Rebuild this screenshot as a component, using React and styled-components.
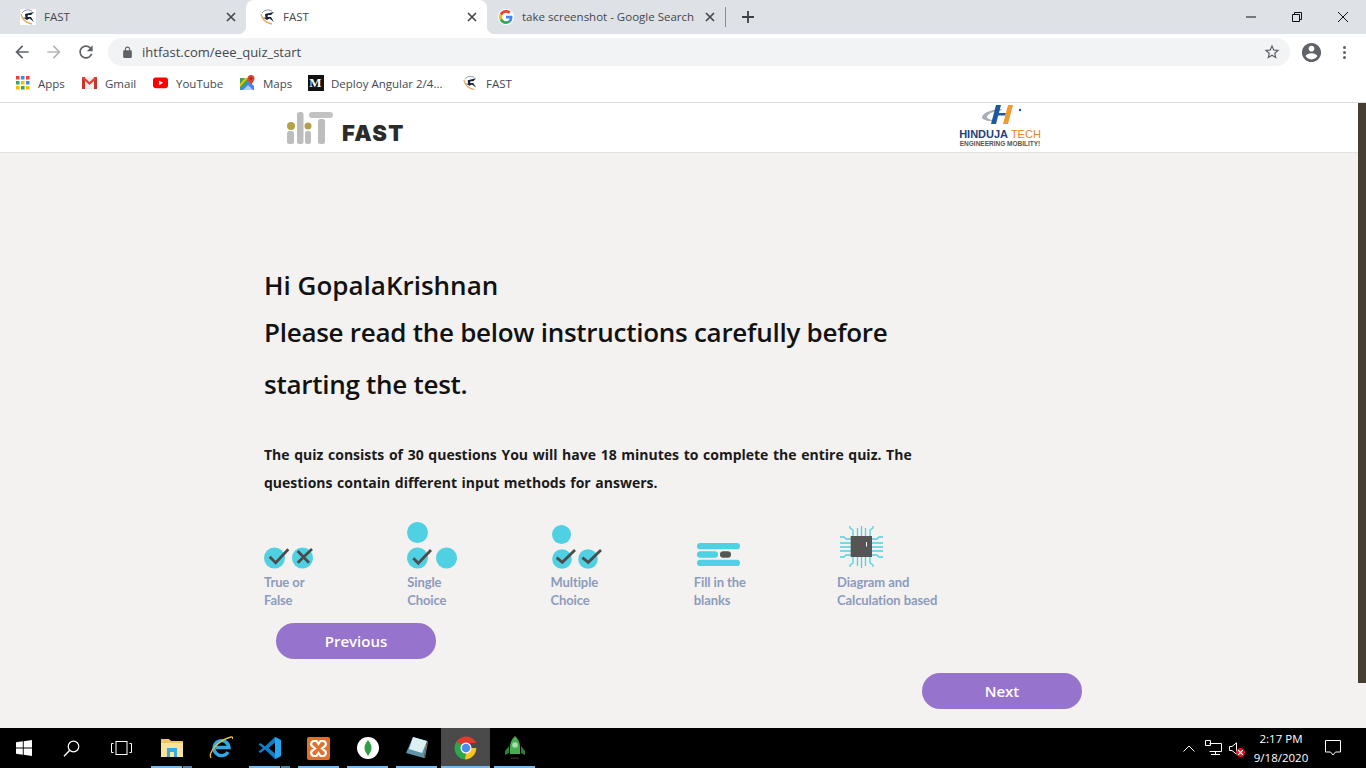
import React from "react";
import styled, { createGlobalStyle } from "styled-components";

const GlobalStyle = createGlobalStyle`
    html, body {
        margin: 0;
        padding: 0;
        overflow: hidden;
        background: #f3f2f1;
    }
    * {
        box-sizing: border-box;
    }
`;

const Favicon = ({ size = 16 }) => (
    <svg width={size} height={size} viewBox="0 0 16 16">
        <rect width="16" height="16" fill="#fff" />
        <path d="M1 5c1 5 5 9 11 10" fill="none" stroke="#eaa75c" strokeWidth="1.300" />
        <path d="M2 4C4 1 8 0 12 2" fill="none" stroke="#7d8594" strokeWidth="0.900" />
        <path d="M5 5l9-2-3 3h-3l-.5 2H11l3 5-4.500-3.500L7 11 3 8.500l2.500.2z" fill="#17233f" />
    </svg>
);

const GoogleIcon = () => (
    <svg width="14" height="14" viewBox="0 0 48 48">
        <path fill="#EA4335" d="M24 9.5c3.5 0 6.700 1.200 9.200 3.600l6.900-6.900C35.900 2.400 30.500 0 24 0 14.600 0 6.500 5.400 2.600 13.200l8 6.200C12.500 13.700 17.800 9.500 24 9.500z" />
        <path fill="#4285F4" d="M46.100 24.500c0-1.600-.1-3.100-.4-4.500H24v9h12.400c-.5 2.900-2.200 5.300-4.600 7l7.700 6c4.400-4.100 6.600-10.200 6.600-17.500z" />
        <path fill="#FBBC05" d="M10.500 28.600c-.5-1.400-.8-3-.8-4.600s.3-3.200.8-4.600l-8-6.200C.9 16.500 0 20.100 0 24s.9 7.500 2.600 10.800l7.900-6.200z" />
        <path fill="#34A853" d="M24 48c6.500 0 11.900-2.100 15.900-5.800l-7.700-6c-2.200 1.500-4.900 2.300-8.200 2.300-6.200 0-11.500-4.200-13.400-9.900l-8 6.200C6.500 42.600 14.600 48 24 48z" />
    </svg>
);

const CloseIcon = () => (
    <svg width="10" height="10" viewBox="0 0 10 10">
        <path d="M1 1l8 8M9 1l-8 8" stroke="#45484d" strokeWidth="1.7" />
    </svg>
);

const Material = ({ d, size = 20, color = "#5f6368" }) => (
    <svg width={size} height={size} viewBox="0 0 24 24">
        <path d={d} fill={color} />
    </svg>
);

const BACK = "M20 11H7.830l5.590-5.590L12 4l-8 8 8 8 1.410-1.410L7.830 13H20v-2z";
const FORWARD = "M12 4l-1.410 1.410L16.170 11H4v2h12.170l-5.580 5.590L12 20l8-8z";
const RELOAD = "M17.650 6.350C16.200 4.900 14.210 4 12 4c-4.420 0-7.990 3.580-7.990 8s3.570 8 7.990 8c3.730 0 6.840-2.550 7.730-6h-2.080c-.82 2.330-3.040 4-5.650 4-3.310 0-6-2.690-6-6s2.690-6 6-6c1.660 0 3.140.69 4.220 1.780L13 11h7V4l-2.350 2.350z";
const LOCK = "M18 8h-1V6c0-2.760-2.240-5-5-5S7 3.240 7 6v2H6c-1.100 0-2 .9-2 2v10c0 1.100.9 2 2 2h12c1.100 0 2-.9 2-2V10c0-1.100-.9-2-2-2zM9 6c0-1.660 1.340-3 3-3s3 1.340 3 3v2H9V6z";
const STAR = "M22 9.240l-7.190-.62L12 2 9.190 8.630 2 9.240l5.460 4.730L5.820 21 12 17.270 18.180 21l-1.630-7.030L22 9.240zM12 15.400l-3.760 2.270 1-4.280-3.320-2.880 4.380-.38L12 6.100l1.710 4.040 4.380.38-3.320 2.880 1 4.280L12 15.400z";
const ACCOUNT = "M12 2C6.480 2 2 6.480 2 12s4.480 10 10 10 10-4.480 10-10S17.520 2 12 2zm0 3c1.660 0 3 1.340 3 3s-1.340 3-3 3-3-1.340-3-3 1.340-3 3-3zm0 14.200c-2.500 0-4.710-1.280-6-3.220.03-1.990 4-3.080 6-3.080 1.990 0 5.970 1.090 6 3.080-1.290 1.940-3.500 3.220-6 3.220z";

const AppsIcon = () => {
    const colors = ["#ea4335", "#4285f4", "#ea4335", "#34a853", "#fbbc05", "#4285f4", "#fbbc05", "#34a853", "#fbbc05"];
    return (
        <svg width="14" height="14" viewBox="0 0 14 14">
            {colors.map((c, i) => (
                <rect key={i} x={(i % 3) * 5} y={Math.floor(i / 3) * 5} width="3.500" height="3.500" fill={c} />
            ))}
        </svg>
    );
};

const GmailIcon = () => (
    <svg width="15" height="12" viewBox="0 0 15 12">
        <rect x="0" y="0" width="15" height="12" fill="#eee" />
        <path d="M0 0h3v12H0zM12 0h3v12h-3z" fill="#c5372c" />
        <path d="M0 0h2l5.500 5L13 0h2v1.500L7.500 8 0 1.500z" fill="#d9443a" />
    </svg>
);

const YouTubeIcon = () => (
    <svg width="16" height="12" viewBox="0 0 16 12">
        <rect width="16" height="11.500" rx="3" fill="#f00" />
        <path d="M6.300 3.200v5.200L10.700 5.800z" fill="#fff" />
    </svg>
);

const MapsIcon = () => (
    <svg width="15" height="16" viewBox="0 0 15 16">
        <path d="M0 3h9v12H0z" fill="#34a853" />
        <path d="M0 15L9 6l5 5v4z" fill="#4285f4" />
        <path d="M0 9l5-6h3L0 12z" fill="#fbbc05" />
        <path d="M3 15l5-5 5 5z" fill="#fff" opacity="0.6" />
        <path d="M11 0a3.500 3.500 0 0 1 3.500 3.500C14.500 6 11 9.500 11 9.500S7.500 6 7.500 3.500A3.500 3.500 0 0 1 11 0z" fill="#db4437" />
        <circle cx="11" cy="3.500" r="1.200" fill="#8e2a20" />
    </svg>
);

const IhtLogo = () => (
    <svg width="46" height="32" viewBox="0 0 46 32">
        <circle cx="4" cy="14" r="4" fill="#b5a04a" />
        <rect x="0" y="19" width="7" height="13" rx="2.500" fill="#bdbdbd" />
        <rect x="10" y="0" width="6.500" height="32" rx="2.500" fill="#bdbdbd" />
        <circle cx="21" cy="14" r="3.500" fill="#b5a04a" />
        <rect x="18" y="19" width="6" height="13" rx="2.500" fill="#bdbdbd" />
        <rect x="22" y="0" width="24" height="6" rx="3" fill="#c2c2c2" />
        <rect x="31" y="7" width="7" height="25" rx="2.500" fill="#bdbdbd" />
    </svg>
);

const HindujaMark = () => (
    <svg width="46" height="21" viewBox="0 0 46 21">
        <path d="M2 13C3 8 14 5 22 5l-1 1.500C14 7 7 10 7 13c0 2 4 3 9 3.500l-1 1C8 17 1.500 16 2 13z" fill="#a9adb5" />
        <path d="M16 1h5l-5 19h-5z" fill="#1c5aa0" />
        <path d="M18 9h8l-.6 2.500h-8z" fill="#1c5aa0" />
        <path d="M28 1h5l-5 19h-5z" fill="#ee9b2f" />
        <circle cx="40" cy="6" r="1.200" fill="#1c5aa0" />
    </svg>
);

const Check = ({ points }) => (
    <polyline points={points} fill="none" stroke="#4c4c4c" strokeWidth="2.800" />
);

const TrueFalseIcon = () => (
    <svg width="50" height="48" viewBox="0 0 50 48">
        <circle cx="10.500" cy="36" r="10.500" fill="#4fd0e3" />
        <circle cx="38.500" cy="36" r="10.500" fill="#4fd0e3" />
        <Check points="5.700,34.700 11.700,40.700 24.300,27.300" />
        <path d="M33.700 29L45 40.700M33.700 40.700L48 27" stroke="#4c4c4c" strokeWidth="2.800" />
    </svg>
);

const SingleChoiceIcon = () => (
    <svg width="52" height="48" viewBox="0 0 52 48">
        <circle cx="10.500" cy="10.500" r="10.500" fill="#4fd0e3" />
        <circle cx="10.500" cy="36" r="10.500" fill="#4fd0e3" />
        <circle cx="39.500" cy="36" r="10.500" fill="#4fd0e3" />
        <Check points="6.300,36.300 11.300,41.300 24,28" />
    </svg>
);

const MultipleChoiceIcon = () => (
    <svg width="52" height="48" viewBox="0 0 52 48">
        <circle cx="10.500" cy="12.500" r="9.500" fill="#4fd0e3" />
        <circle cx="11" cy="37" r="9.800" fill="#4fd0e3" />
        <circle cx="37" cy="37" r="9.800" fill="#4fd0e3" />
        <Check points="5.700,35.700 11.300,40.300 24,28" />
        <Check points="31.300,35.700 37.300,40.300 50,28" />
    </svg>
);

const FillBlanksIcon = () => (
    <svg width="50" height="48" viewBox="0 0 50 48">
        <rect x="3" y="21" width="43" height="6.300" rx="3.100" fill="#4fd0e3" />
        <rect x="3" y="29.300" width="21" height="6.400" rx="3.200" fill="#4fd0e3" />
        <rect x="26" y="29.300" width="11" height="6.400" rx="3.200" fill="#555" />
        <rect x="3" y="37.700" width="43" height="6.300" rx="3.100" fill="#4fd0e3" />
    </svg>
);

const ChipIcon = () => (
    <svg width="50" height="48" viewBox="0 0 50 48">
        <g fill="none" stroke="#4fd0e3" strokeWidth="1.300">
            <path d="M24.500 4v10M20.500 6v8M28.500 6v8M16 14V8l-3-2V4M33 14V8l3-2V4" />
            <path d="M24.500 35v11M20.500 35v9M28.500 35v9M16 35v6l-3 2v2M33 35v6l3 2v2" />
            <path d="M3 25h11M3 21h11M3 29h11M14 17H9l-2-2H3M14 33H9l-2 2H3" />
            <path d="M35 25h11M35 21h11M35 29h11M35 17h5l2-2h4M35 33h5l2 2h4" />
        </g>
        <rect x="13.700" y="14" width="21.300" height="21" fill="#555" />
        <rect x="29" y="20" width="1" height="4.500" fill="#fff" />
    </svg>
);

const WindowsLogo = () => (
    <svg width="16" height="16" viewBox="0 0 16 16">
        <path d="M0 2.300l6.800-1v6.300H0zM7.700 1.200L16 0v7.600H7.700zM0 8.500h6.800v6.300l-6.800-1zM7.700 8.500H16V16l-8.300-1.200z" fill="#fff" />
    </svg>
);

const SearchGlyph = () => (
    <svg width="17" height="17" viewBox="0 0 17 17">
        <circle cx="10.500" cy="6.500" r="5.300" fill="none" stroke="#fff" strokeWidth="1.200" />
        <path d="M6.800 10.300L1 16.200" stroke="#fff" strokeWidth="1.400" />
    </svg>
);

const TaskViewGlyph = () => (
    <svg width="21" height="14" viewBox="0 0 21 14">
        <rect x="5" y="0.500" width="11" height="13" fill="none" stroke="#fff" />
        <path d="M2.500 2.500H.5v9h2M18.500 2.500h2v9h-2" fill="none" stroke="#fff" />
    </svg>
);

const ExplorerGlyph = () => (
    <svg width="22" height="18" viewBox="0 0 22 18">
        <path d="M0 0h8l2 2h12v16H0z" fill="#efc75e" />
        <path d="M0 4h22v14H0z" fill="#fce39b" />
        <path d="M6 9h10v9h-3v-5H9v5H6z" fill="#35a9e0" />
        <path d="M9 13h4v5H9z" fill="#fce39b" />
    </svg>
);

const EdgeGlyph = () => (
    <svg width="24" height="24" viewBox="0 0 24 24">
        <path d="M19 16A7.500 7.500 0 1 1 20 11.500H7" fill="none" stroke="#2fa9e8" strokeWidth="3.300" />
        <path d="M2 22C-1 17 9 4 22 1c1.500-.3 2 .5 1.500 2" fill="none" stroke="#e5c13c" strokeWidth="1.300" />
    </svg>
);

const VsCodeGlyph = () => (
    <svg width="24" height="24" viewBox="0 0 24 24">
        <path d="M17 1l6 3v16l-6 3-10-9.500L2.500 17 .5 15.500 5 12 .5 8.500 2.500 7 7 10.500z" fill="#0f7fcc" />
        <path d="M17 6.500L10.500 12l6.500 5.500z" fill="#000" />
        <path d="M17 1l6 3v16l-6 3z" fill="#24a6f0" />
    </svg>
);

const XamppGlyph = () => (
    <svg width="23" height="23" viewBox="0 0 23 23">
        <rect width="23" height="23" rx="2" fill="#e0702c" />
        <path d="M7 4h2.500l2 3 2-3H16a3 3 0 0 1 1.500 5.500L15 11.500l2.500 2A3 3 0 0 1 16 19h-2.500l-2-3-2 3H7a3 3 0 0 1-1.500-5.500l2.500-2-2.500-2A3 3 0 0 1 7 4z" fill="none" stroke="#fff" strokeWidth="2.200" />
    </svg>
);

const MongoGlyph = () => (
    <svg width="22" height="22" viewBox="0 0 22 22">
        <circle cx="11" cy="11" r="11" fill="#fff" />
        <path d="M11 3c2.500 3 3.500 5.500 3.500 8S13 16 11 19c-2-3-3.500-5.500-3.500-8S8.500 6 11 3z" fill="#2f9e44" />
    </svg>
);

const NotepadGlyph = () => (
    <svg width="24" height="24" viewBox="0 0 24 24">
        <path d="M8 1l14 4-3 17L1 17z" fill="#5f93a8" />
        <path d="M8 1l14 4-5 12L4 13z" fill="#dcf0f4" />
        <path d="M19 22l3-17 1 1-3 16z" fill="#8a7a5a" />
    </svg>
);

const ChromeGlyph = () => (
    <svg width="24" height="24" viewBox="0 0 24 24">
        <path d="M12 12L2.500 5.500A11.500 11.500 0 0 1 22.300 7H12z" fill="#e33b2e" />
        <path d="M12 12h10.300A11.500 11.500 0 0 1 11 23.500L12 12z" fill="#f9c520" />
        <path d="M12 12l-1 11.500A11.500 11.500 0 0 1 2.500 5.500z" fill="#2ea64a" />
        <circle cx="12" cy="12" r="5.500" fill="#fff" />
        <circle cx="12" cy="12" r="4.300" fill="#4a8bf0" />
    </svg>
);

const RocketGlyph = () => (
    <svg width="20" height="24" viewBox="0 0 20 24">
        <path d="M10 0c3.500 3 5 7 5 11v7H5v-7c0-4 1.500-8 5-11z" fill="#46ad50" />
        <path d="M4 10L0 15v4l4-2zM16 10l4 5v4l-4-2z" fill="#2f7d38" />
        <circle cx="10" cy="9" r="2.800" fill="#a8e0ad" />
        <path d="M6 21.500h8V23H6z" fill="#2b2b2b" />
    </svg>
);

function GoogleBadge() {
    return (
        <FaviconCircle>
            <GoogleIcon />
        </FaviconCircle>
    );
}

function MediumIcon() {
    return <MediumBadge>M</MediumBadge>;
}

const tabs = [
    { title: "FAST", width: 246, padLeft: 20, gap: 8, icon: <Favicon /> },
    { title: "FAST", width: 241, padLeft: 14, gap: 7, active: true, icon: <Favicon /> },
    { title: "take screenshot - Google Search", width: 238, padLeft: 11, gap: 8, icon: <GoogleBadge /> },
];

const bookmarks = [
    { label: "Apps", width: 67, icon: <AppsIcon /> },
    { label: "Gmail", width: 71, icon: <GmailIcon /> },
    { label: "YouTube", width: 87, icon: <YouTubeIcon /> },
    { label: "Maps", width: 68, icon: <MapsIcon /> },
    { label: "Deploy Angular 2/4...", width: 155, icon: <MediumIcon /> },
    { label: "FAST", width: 60, icon: <Favicon /> },
];

const features = [
    { lines: ["True or", "False"], icon: <TrueFalseIcon /> },
    { lines: ["Single", "Choice"], icon: <SingleChoiceIcon /> },
    { lines: ["Multiple", "Choice"], icon: <MultipleChoiceIcon /> },
    { lines: ["Fill in the", "blanks"], icon: <FillBlanksIcon /> },
    { lines: ["Diagram and", "Calculation based"], icon: <ChipIcon /> },
];

const taskItems = [
    { icon: <ExplorerGlyph />, running: true, stacked: true },
    { icon: <EdgeGlyph /> },
    { icon: <VsCodeGlyph />, running: true, stacked: true },
    { icon: <XamppGlyph />, running: true },
    { icon: <MongoGlyph />, running: true },
    { icon: <NotepadGlyph />, running: true },
    { icon: <ChromeGlyph />, running: true, current: true },
    { icon: <RocketGlyph />, running: true },
];

export default function App() {
    return (
        <Screen>
            <GlobalStyle />
            <TabStrip>
                {tabs.map((tab, i) => (
                    <Tab key={i} $width={tab.width} $padLeft={tab.padLeft} $gap={tab.gap} $active={tab.active}>
                        {tab.icon}
                        <TabTitle>{tab.title}</TabTitle>
                        <TabClose>
                            <CloseIcon />
                        </TabClose>
                    </Tab>
                ))}
                <TabDivider />
                <NewTab>
                    <svg width="12" height="12" viewBox="0 0 12 12">
                        <path d="M6 0v12M0 6h12" stroke="#3c4043" strokeWidth="1.800" />
                    </svg>
                </NewTab>
                <WindowControls>
                    <WindowButton>
                        <svg width="10" height="10" viewBox="0 0 10 10">
                            <path d="M0 5h10" stroke="#111" />
                        </svg>
                    </WindowButton>
                    <WindowButton>
                        <svg width="10" height="10" viewBox="0 0 10 10">
                            <path d="M.5 2.500h7v7h-7zM2.500 2.500v-2h7v7h-2" fill="none" stroke="#111" />
                        </svg>
                    </WindowButton>
                    <WindowButton>
                        <svg width="10" height="10" viewBox="0 0 10 10">
                            <path d="M0 0l10 10M10 0L0 10" stroke="#111" />
                        </svg>
                    </WindowButton>
                </WindowControls>
            </TabStrip>

            <Toolbar>
                <NavButton>
                    <Material d={BACK} />
                </NavButton>
                <NavButton>
                    <Material d={FORWARD} color="#b4b6b9" />
                </NavButton>
                <NavButton>
                    <Material d={RELOAD} />
                </NavButton>
                <Omnibox>
                    <Material d={LOCK} size={13} />
                    <UrlText>ihtfast.com/eee_quiz_start</UrlText>
                    <StarSlot>
                        <Material d={STAR} size={18} />
                    </StarSlot>
                </Omnibox>
                <ProfileButton>
                    <Material d={ACCOUNT} size={23} />
                </ProfileButton>
                <MenuDots>
                    <Dot />
                    <Dot />
                    <Dot />
                </MenuDots>
            </Toolbar>

            <BookmarkBar>
                {bookmarks.map((b) => (
                    <Bookmark key={b.label} $width={b.width}>
                        <BookmarkIcon>{b.icon}</BookmarkIcon>
                        <span>{b.label}</span>
                    </Bookmark>
                ))}
            </BookmarkBar>

            <Viewport>
                <Page>
                    <SiteHeader>
                        <SiteLogo>
                            <IhtLogo />
                            <SiteName>FAST</SiteName>
                        </SiteLogo>
                        <PartnerLogo>
                            <PartnerMark>
                                <HindujaMark />
                            </PartnerMark>
                            <PartnerName>
                                HINDUJA<PartnerAccent> TECH</PartnerAccent>
                            </PartnerName>
                            <PartnerTag>ENGINEERING MOBILITY!</PartnerTag>
                        </PartnerLogo>
                    </SiteHeader>
                    <Content>
                        <Greeting>Hi GopalaKrishnan</Greeting>
                        <Heading>Please read the below instructions carefully before starting the test.</Heading>
                        <Intro>
                            The quiz consists of 30 questions You will have 18 minutes to complete the entire quiz. The questions contain different input methods for answers.
                        </Intro>
                        <Features>
                            {features.map((f) => (
                                <Feature key={f.lines[0]}>
                                    <FeatureIcon>{f.icon}</FeatureIcon>
                                    <FeatureLabel>
                                        {f.lines[0]}
                                        <br />
                                        {f.lines[1]}
                                    </FeatureLabel>
                                </Feature>
                            ))}
                        </Features>
                        <PreviousButton>Previous</PreviousButton>
                        <NextButton>Next</NextButton>
                    </Content>
                </Page>
                <ScrollTrack>
                    <ScrollThumb />
                </ScrollTrack>
            </Viewport>

            <Taskbar>
                <TaskSlot $width={47}>
                    <WindowsLogo />
                </TaskSlot>
                <TaskSlot $width={49}>
                    <SearchGlyph />
                </TaskSlot>
                <TaskSlot $width={51}>
                    <TaskViewGlyph />
                </TaskSlot>
                {taskItems.map((item, i) => (
                    <TaskApp key={i} $running={item.running} $current={item.current} $stacked={item.stacked}>
                        {item.icon}
                    </TaskApp>
                ))}
                <Tray>
                    <svg width="12" height="7" viewBox="0 0 12 7">
                        <path d="M.5 6.500L6 1l5.500 5.500" fill="none" stroke="#fff" />
                    </svg>
                    <TrayNetwork>
                        <svg width="17" height="16" viewBox="0 0 17 16">
                            <path d="M4.500 3.500h12v8h-12M10.500 11.500v3M6 14.500h9M.5.5h5v5h-5z" fill="none" stroke="#fff" />
                        </svg>
                    </TrayNetwork>
                    <SpeakerWrap>
                        <svg width="9" height="13" viewBox="0 0 9 13">
                            <path d="M.5 4.500h2.500L7.500.8v11.400L3 8.500H.5z" fill="none" stroke="#fff" />
                        </svg>
                        <MuteBadge>
                            <svg width="5" height="5" viewBox="0 0 5 5">
                                <path d="M0 0l5 5M5 0L0 5" stroke="#fff" strokeWidth="1.200" />
                            </svg>
                        </MuteBadge>
                    </SpeakerWrap>
                    <Clock>
                        <div>2:17 PM</div>
                        <div>9/18/2020</div>
                    </Clock>
                    <NotifySlot>
                        <svg width="16" height="16" viewBox="0 0 16 16">
                            <path d="M.5.5h15v11.500h-5L8 15l-2.500-3h-5z" fill="none" stroke="#fff" />
                        </svg>
                    </NotifySlot>
                </Tray>
            </Taskbar>
        </Screen>
    );
}

const Screen = styled.div`
    width: 1366px;
    height: 768px;
    display: flex;
    flex-direction: column;
    overflow: hidden;
    font-family: "Open Sans", "Liberation Sans", sans-serif;
`;
const TabStrip = styled.div`
    height: 34px;
    flex: none;
    display: flex;
    align-items: center;
    background: #dee1e6;
`;
const Tab = styled.div`
    position: relative;
    width: ${(p) => p.$width}px;
    height: 34px;
    display: flex;
    align-items: center;
    gap: ${(p) => p.$gap}px;
    padding-left: ${(p) => p.$padLeft}px;
    padding-right: 10px;
    border-radius: 8px 8px 0 0;
    background: ${(p) => (p.$active ? "#fff" : "transparent")};

    &::before,
    &::after {
        content: ${(p) => (p.$active ? '""' : "none")};
        position: absolute;
        bottom: 0;
        width: 8px;
        height: 8px;
    }
    &::before {
        left: -8px;
        background: radial-gradient(circle at 0 0, transparent 8px, #fff 8.5px);
    }
    &::after {
        right: -8px;
        background: radial-gradient(circle at 100% 0, transparent 8px, #fff 8.5px);
    }
`;
const FaviconCircle = styled.span`
    width: 16px;
    height: 16px;
    flex: none;
    display: flex;
    align-items: center;
    justify-content: center;
    border-radius: 50%;
    background: #fff;
`;
const TabTitle = styled.span`
    padding-bottom: 2px;
    font-size: 11.500px;
    color: #45484d;
    white-space: nowrap;
`;
const TabClose = styled.span`
    margin-left: auto;
    display: flex;
`;
const TabDivider = styled.span`
    width: 1px;
    height: 20px;
    background: #8a8d91;
`;
const NewTab = styled.span`
    margin-left: 16px;
    display: flex;
`;
const WindowControls = styled.div`
    margin-left: auto;
    display: flex;
    height: 34px;
`;
const WindowButton = styled.span`
    width: 46px;
    display: flex;
    align-items: center;
    justify-content: center;
`;
const Toolbar = styled.div`
    height: 36px;
    flex: none;
    display: flex;
    align-items: center;
    padding-left: 6px;
    background: #fff;
`;
const NavButton = styled.span`
    width: 32px;
    display: flex;
    justify-content: center;
`;
const Omnibox = styled.div`
    width: 1182px;
    height: 28px;
    margin-left: 6px;
    display: flex;
    align-items: center;
    padding: 0 9px 0 13px;
    border-radius: 14px;
    background: #f1f3f4;
`;
const UrlText = styled.span`
    margin-left: 8px;
    font-size: 13px;
    color: #45484d;
`;
const StarSlot = styled.span`
    margin-left: auto;
    display: flex;
`;
const ProfileButton = styled.span`
    margin-left: 10px;
    display: flex;
`;
const MenuDots = styled.span`
    margin-left: 20px;
    display: flex;
    flex-direction: column;
    gap: 2px;
`;
const Dot = styled.span`
    width: 3px;
    height: 3px;
    border-radius: 50%;
    background: #5f6368;
`;
const BookmarkBar = styled.div`
    height: 33px;
    flex: none;
    display: flex;
    align-items: center;
    padding: 0 0 6px 15px;
    background: #fff;
    border-bottom: 1px solid #dadce0;
`;
const Bookmark = styled.div`
    width: ${(p) => p.$width}px;
    flex: none;
    display: flex;
    align-items: center;
    gap: 8px;
    font-size: 11.500px;
    color: #45484d;
    white-space: nowrap;
`;
const BookmarkIcon = styled.span`
    width: 15px;
    height: 16px;
    flex: none;
    display: flex;
    align-items: center;
    justify-content: center;
`;
const MediumBadge = styled.span`
    width: 16px;
    height: 16px;
    flex: none;
    display: flex;
    align-items: center;
    justify-content: center;
    background: #111;
    color: #fff;
    font-family: "Liberation Serif", serif;
    font-size: 13px;
    font-weight: 700;
`;
const Viewport = styled.div`
    flex: 1;
    min-height: 0;
    display: flex;
    background: #f3f2f1;
`;
const Page = styled.div`
    flex: 1;
    min-width: 0;
`;
const SiteHeader = styled.header`
    height: 50px;
    display: flex;
    align-items: flex-start;
    padding-left: 287px;
    background: #fff;
    border-bottom: 1px solid #e3e3e3;
`;
const SiteLogo = styled.div`
    width: 673px;
    display: flex;
    align-items: flex-start;
    gap: 9px;
    padding-top: 9px;
`;
const SiteName = styled.span`
    font-family: "Inter", sans-serif;
    font-size: 22px;
    font-weight: 900;
    letter-spacing: 1.300px;
    color: #2b2b2b;
    line-height: 26px;
    padding-top: 8px;
`;
const PartnerLogo = styled.div`
    width: 80px;
    display: flex;
    flex-direction: column;
    align-items: center;
    padding-top: 1px;
`;
const PartnerMark = styled.div`
    display: flex;
    margin-left: 5px;
`;
const PartnerName = styled.div`
    margin-top: 4px;
    font-family: "Liberation Sans", sans-serif;
    font-size: 11px;
    font-weight: 700;
    line-height: 11px;
    color: #23407a;
    white-space: nowrap;
`;
const PartnerAccent = styled.span`
    color: #e0892c;
    font-weight: 400;
`;
const PartnerTag = styled.div`
    font-family: "Liberation Sans", sans-serif;
    font-size: 6.500px;
    font-weight: 700;
    line-height: 7px;
    color: #555;
    white-space: nowrap;
`;
const Content = styled.main`
    padding: 111px 0 0 264px;
`;
const Greeting = styled.div`
    font-size: 26px;
    font-weight: 600;
    line-height: 42px;
    color: #111;
`;
const Heading = styled.h1`
    width: 660px;
    margin: 0;
    font-size: 26px;
    font-weight: 600;
    letter-spacing: -0.270px;
    line-height: 52px;
    color: #111;
`;
const Intro = styled.p`
    width: 680px;
    margin: 31px 0 0;
    font-size: 14px;
    font-weight: 700;
    word-spacing: 1px;
    line-height: 28px;
    color: #1a1a1a;
`;
const Features = styled.div`
    margin-top: 25px;
    display: grid;
    grid-template-columns: repeat(5, 143.250px);
`;
const Feature = styled.div`
    display: flex;
    flex-direction: column;
`;
const FeatureIcon = styled.div`
    height: 48px;
    display: flex;
`;
const FeatureLabel = styled.div`
    margin-top: 3px;
    font-family: "Lato", sans-serif;
    font-size: 13px;
    font-weight: 700;
    letter-spacing: -0.100px;
    line-height: 18px;
    color: #8c9bbd;
    white-space: nowrap;
`;
const PillButton = styled.button`
    display: block;
    width: 160px;
    height: 36px;
    border: 0;
    border-radius: 18px;
    background: #9673cc;
    color: #fff;
    font-family: inherit;
    font-size: 15px;
    font-weight: 600;
`;
const PreviousButton = styled(PillButton)`
    margin: 14px 0 0 12px;
`;
const NextButton = styled(PillButton)`
    margin: 14px 0 0 658px;
`;
const ScrollTrack = styled.div`
    width: 8px;
    flex: none;
    background: #f3f2f1;
`;
const ScrollThumb = styled.div`
    height: 580px;
    background: #463d33;
`;
const Taskbar = styled.div`
    height: 40px;
    flex: none;
    display: flex;
    align-items: stretch;
    background: #000;
`;
const TaskSlot = styled.div`
    width: ${(p) => p.$width}px;
    flex: none;
    display: flex;
    align-items: center;
    justify-content: center;
`;
const TaskApp = styled.div`
    position: relative;
    width: 49px;
    flex: none;
    display: flex;
    align-items: center;
    justify-content: center;
    background: ${(p) => (p.$current ? "#4a4a4a" : "transparent")};

    &::after {
        content: "";
        position: absolute;
        bottom: 0;
        left: ${(p) => (p.$current ? "0" : "4px")};
        right: ${(p) => (p.$current ? "0" : "4px")};
        height: 2px;
        background: ${(p) =>
            !p.$running
                ? "transparent"
                : p.$stacked
                ? "linear-gradient(to right, #76b9ed 31px, #000 31px, #000 32px, #4d83ad 32px)"
                : "#76b9ed"};
    }
`;
const Tray = styled.div`
    margin-left: auto;
    padding-right: 9px;
    display: flex;
    align-items: center;
`;
const TrayNetwork = styled.span`
    margin-left: 10px;
    display: flex;
`;
const SpeakerWrap = styled.span`
    position: relative;
    margin-left: 7px;
    width: 16px;
    display: flex;
`;
const MuteBadge = styled.span`
    position: absolute;
    right: 0;
    bottom: -2px;
    width: 9px;
    height: 9px;
    display: flex;
    align-items: center;
    justify-content: center;
    border-radius: 50%;
    background: #e81123;
`;
const Clock = styled.div`
    width: 56px;
    margin-left: 8px;
    font-size: 11.500px;
    line-height: 19px;
    color: #fff;
    text-align: center;
    white-space: nowrap;
`;
const NotifySlot = styled.span`
    width: 48px;
    display: flex;
    justify-content: center;
`;
